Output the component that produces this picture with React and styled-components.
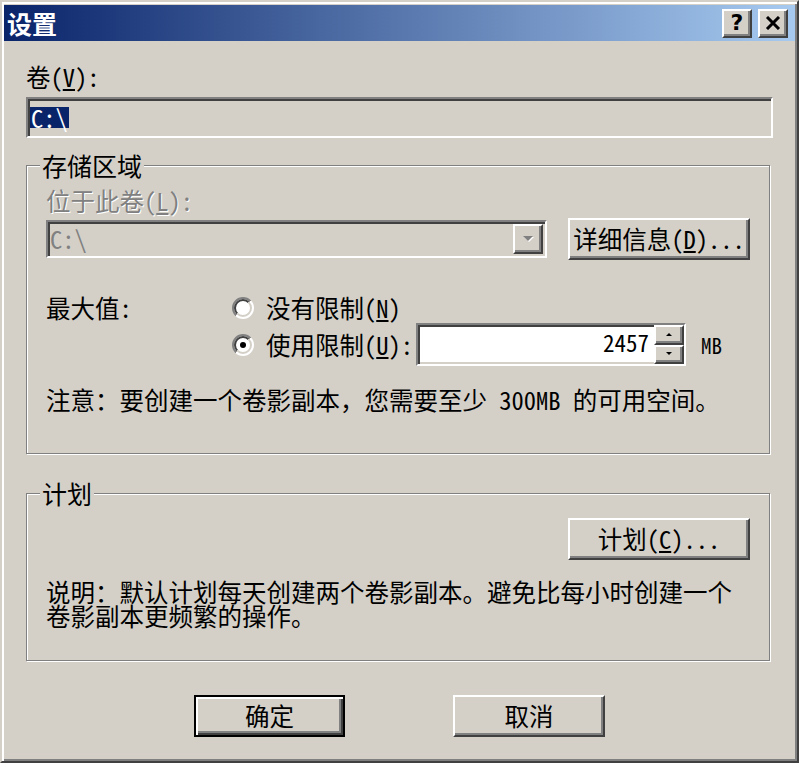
import React, { useId } from "react";
import styled, { createGlobalStyle, css } from "styled-components";

const FONT = `"Noto Sans Mono CJK SC", "Noto Sans CJK SC", "Noto Sans", sans-serif`;

const Global = createGlobalStyle`
  html, body { margin: 0; padding: 0; background: #d4d0c8; }
  body { font-family: ${FONT}; font-size: 24.5px; color: #000; }
  * { box-sizing: border-box; }
`;

const raised = css`
  border: 2px solid;
  border-color: #fff #404040 #404040 #fff;
  box-shadow: inset -2px -2px 0 #808080;
  background: #d4d0c8;
`;

const sunken = css`
  border: 2px solid;
  border-color: #808080 #fff #fff #808080;
  box-shadow: inset 2px 2px 0 #404040, inset -2px -2px 0 #d4d0c8;
`;

const Dialog = styled.div`
  width: 799px;
  height: 763px;
  display: flex;
  flex-direction: column;
  background: #d4d0c8;
  border: 2px solid;
  border-color: #d4d0c8 #404040 #404040 #d4d0c8;
  box-shadow: inset 2px 2px 0 #fff, inset -2px -2px 0 #808080;
  padding: 3px 2px 2px 2px;
`;

const TitleBar = styled.div`
  height: 36px;
  display: flex;
  align-items: center;
  padding: 0 7px 0 3px;
  background: linear-gradient(to right, #0a246a 0%, #a6caf0 100%);
`;

const TitleText = styled.div`
  flex: 1;
  color: #fff;
  font-weight: 700;
  font-size: 25px;
  line-height: 36px;
`;

const TitleButtons = styled.div`
  display: flex;
  gap: 6px;
`;

const TitleButton = styled.div`
  ${raised};
  width: 30px;
  height: 29px;
  display: flex;
  align-items: center;
  justify-content: center;
  font-family: "DejaVu Sans", sans-serif;
  font-weight: 700;
  font-size: 22px;
  line-height: 1;
  padding-bottom: 1px;
`;

const Body = styled.div`
  flex: 1;
  display: flex;
  flex-direction: column;
  padding: 21px 22px 0 22px;
`;

const Label = styled.div`
  line-height: 30px;
  color: ${(p) => (p.$disabled ? "#808080" : "#000")};
  text-shadow: ${(p) => (p.$disabled ? "1px 1px 0 #fff" : "none")};
  white-space: nowrap;
`;

const Mn = styled.span`
  text-decoration: underline;
  text-underline-offset: 2px;
`;

const ReadField = styled.div`
  ${sunken};
  margin-top: 5px;
  height: 41px;
  background: #d4d0c8;
  display: flex;
  align-items: center;
  padding: 0 2px;
`;

const Selected = styled.span`
  background: #0a246a;
  color: #fff;
  line-height: 21px;
  padding: 0 1px;
`;

const Group = styled.fieldset`
  margin: ${(p) => p.$top}px 3px 0 0;
  padding: ${(p) => p.$pt}px 19px ${(p) => p.$pb}px 19px;
  min-width: 0;
  border: 1px solid #808080;
  box-shadow: inset 1px 1px 0 #fff, 1px 1px 0 #fff;
`;

const Legend = styled.legend`
  margin-left: -6px;
  padding: 0 2px;
  line-height: 30px;
  font-size: 25px;
  background: #d4d0c8;
`;

const Row = styled.div`
  display: flex;
  align-items: center;
  gap: ${(p) => p.$gap || 0}px;
  margin-top: ${(p) => p.$top || 0}px;
  justify-content: ${(p) => p.$justify || "flex-start"};
`;

const Combo = styled.div`
  ${sunken};
  flex: 1;
  height: 38px;
  background: #d4d0c8;
  display: flex;
  align-items: center;
  padding: 0 2px;
`;

const ComboValue = styled.div`
  flex: 1;
  color: #808080;
  line-height: 30px;
`;

const DropButton = styled.div`
  ${raised};
  width: 30px;
  height: 30px;
  display: flex;
  align-items: center;
  justify-content: center;
`;

const PushButton = styled.button`
  ${raised};
  width: ${(p) => p.$w}px;
  height: 42px;
  padding: 0;
  font-family: ${FONT};
  font-size: 24.5px;
  color: #000;
  line-height: 1;
  white-space: nowrap;
  display: flex;
  align-items: center;
  justify-content: center;
  ${(p) =>
    p.$default &&
    css`
      border: 2px solid #000;
      box-shadow: inset 2px 2px 0 #fff, inset -2px -2px 0 #404040,
        inset -4px -4px 0 #808080;
    `}
`;

const MaxGrid = styled.div`
  display: grid;
  grid-template-columns: 186px auto;
  margin-top: 33px;
`;

const RadioCol = styled.div`
  display: flex;
  flex-direction: column;
`;

const RadioRow = styled.div`
  display: flex;
  align-items: center;
  height: ${(p) => p.$h}px;
`;

const RadioText = styled.span`
  margin-left: 12px;
  line-height: 30px;
  white-space: nowrap;
`;

const Spin = styled.div`
  ${sunken};
  width: 270px;
  height: 43px;
  margin-left: 3px;
  background: #fff;
  display: flex;
  align-items: stretch;
`;

const SpinValue = styled.div`
  flex: 1;
  text-align: right;
  padding-right: 5px;
  line-height: 35px;
  font-size: 23px;
`;

const SpinButtons = styled.div`
  width: 30px;
  display: flex;
  flex-direction: column;
`;

const SpinHalf = styled.div`
  ${raised};
  flex: 1;
  display: flex;
  align-items: center;
  justify-content: center;
`;

const Unit = styled.span`
  margin-left: 15px;
  font-size: 21px;
  line-height: 30px;
`;

const Note = styled.div`
  margin-top: 19px;
  line-height: 30px;
  white-space: nowrap;
`;

const Desc = styled.div`
  margin-top: 20px;
  line-height: 24px;
`;

const Footer = styled.div`
  display: flex;
  justify-content: center;
  gap: 108px;
  margin-top: 34px;
`;

function Radio({ checked }) {
  const id = useId().replace(/:/g, "");
  return (
    <svg width="22" height="22" viewBox="0 0 22 22">
      <defs>
        <linearGradient id={`o${id}`} x1="0" y1="0" x2="1" y2="1">
          <stop offset="0" stopColor="#808080" />
          <stop offset="0.5" stopColor="#808080" />
          <stop offset="0.5" stopColor="#ffffff" />
          <stop offset="1" stopColor="#ffffff" />
        </linearGradient>
        <linearGradient id={`i${id}`} x1="0" y1="0" x2="1" y2="1">
          <stop offset="0" stopColor="#404040" />
          <stop offset="0.5" stopColor="#404040" />
          <stop offset="0.5" stopColor="#d4d0c8" />
          <stop offset="1" stopColor="#d4d0c8" />
        </linearGradient>
      </defs>
      <circle cx="11" cy="11" r="10" fill="#fff" stroke={`url(#o${id})`} strokeWidth="2" />
      <circle cx="11" cy="11" r="8" fill="#fff" stroke={`url(#i${id})`} strokeWidth="2" />
      {checked && <circle cx="11" cy="11" r="3" fill="#000" />}
    </svg>
  );
}

function Arrow({ dir = "down", color = "#000", shadow, w = 10 }) {
  const h = w / 2;
  const pts =
    dir === "down"
      ? `0,0 ${w},0 ${w / 2},${h}`
      : `0,${h} ${w},${h} ${w / 2},0`;
  return (
    <svg width={w + 1} height={h + 1} viewBox={`0 0 ${w + 1} ${h + 1}`}>
      {shadow && <polygon points={pts} fill={shadow} transform="translate(1,1)" />}
      <polygon points={pts} fill={color} />
    </svg>
  );
}

function CloseGlyph() {
  return (
    <svg width="16" height="14" viewBox="0 0 16 14">
      <path d="M2 1 L14 13 M14 1 L2 13" stroke="#000" strokeWidth="3" />
    </svg>
  );
}

export default function App() {
  return (
    <>
      <Global />
      <Dialog>
        <TitleBar>
          <TitleText>设置</TitleText>
          <TitleButtons>
            <TitleButton>?</TitleButton>
            <TitleButton>
              <CloseGlyph />
            </TitleButton>
          </TitleButtons>
        </TitleBar>
        <Body>
          <Label>
            卷(<Mn>V</Mn>):
          </Label>
          <ReadField>
            <Selected>C:\</Selected>
          </ReadField>

          <Group $top={12} $pt={6} $pb={38}>
            <Legend>存储区域</Legend>
            <Label $disabled>
              位于此卷(<Mn>L</Mn>):
            </Label>
            <Row $top={2} $gap={21}>
              <Combo>
                <ComboValue>C:\</ComboValue>
                <DropButton>
                  <Arrow dir="down" color="#808080" shadow="#fff" w={10} />
                </DropButton>
              </Combo>
              <PushButton $w={182}>
                详细信息(<Mn>D</Mn>)...
              </PushButton>
            </Row>
            <MaxGrid>
              <Label>最大值:</Label>
              <RadioCol>
                <RadioRow $h={30}>
                  <Radio />
                  <RadioText>
                    没有限制(<Mn>N</Mn>)
                  </RadioText>
                </RadioRow>
                <RadioRow $h={43}>
                  <Radio checked />
                  <RadioText>
                    使用限制(<Mn>U</Mn>):
                  </RadioText>
                  <Spin>
                    <SpinValue>2457</SpinValue>
                    <SpinButtons>
                      <SpinHalf>
                        <Arrow dir="up" w={6} />
                      </SpinHalf>
                      <SpinHalf>
                        <Arrow dir="down" w={6} />
                      </SpinHalf>
                    </SpinButtons>
                  </Spin>
                  <Unit>MB</Unit>
                </RadioRow>
              </RadioCol>
            </MaxGrid>
            <Note>注意：要创建一个卷影副本，您需要至少 300MB 的可用空间。</Note>
          </Group>

          <Group $top={24} $pt={10} $pb={32}>
            <Legend>计划</Legend>
            <Row $justify="flex-end">
              <PushButton $w={182}>
                计划(<Mn>C</Mn>)...
              </PushButton>
            </Row>
            <Desc>
              说明：默认计划每天创建两个卷影副本。避免比每小时创建一个卷影副本更频繁的操作。
            </Desc>
          </Group>

          <Footer>
            <PushButton $w={151} $default>
              确定
            </PushButton>
            <PushButton $w={152}>取消</PushButton>
          </Footer>
        </Body>
      </Dialog>
    </>
  );
}
